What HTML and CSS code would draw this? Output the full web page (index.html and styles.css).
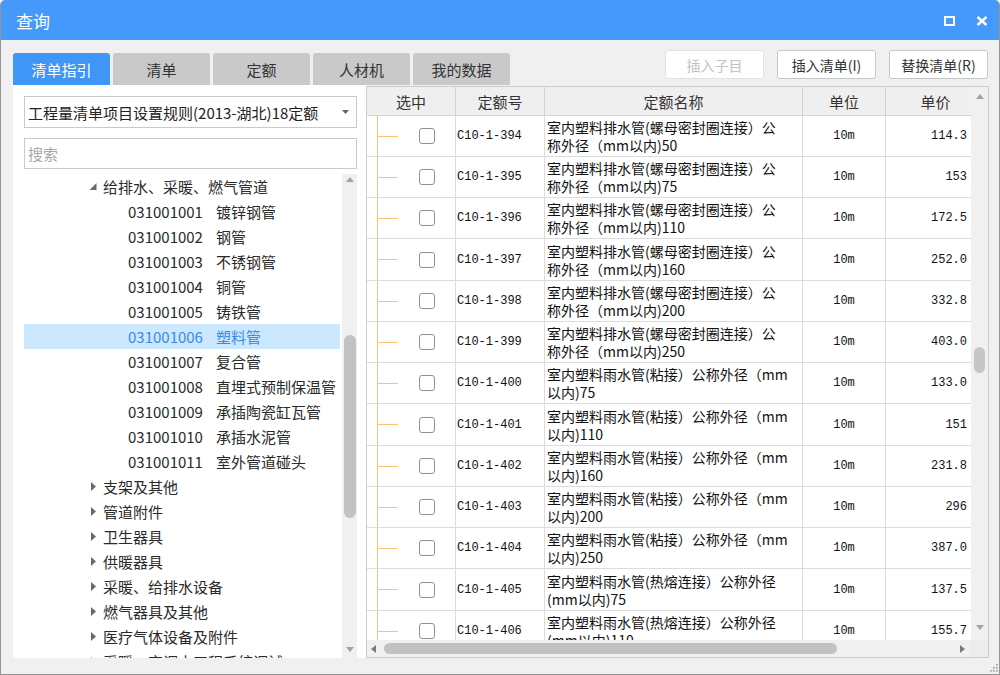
FILE: index.html
```html
<!DOCTYPE html>
<html lang="zh-CN">
<head>
<meta charset="utf-8">
<title>查询</title>
<link rel="stylesheet" href="styles.css">
</head>
<body>
<div class="window">
  <div class="titlebar">
    <span class="title">查询</span>
    <div class="ctrls">
      <svg width="11" height="10" viewBox="0 0 11 10"><rect x="1" y="1" width="9" height="8" fill="none" stroke="#fff" stroke-width="2"/></svg>
      <svg width="12" height="10" viewBox="0 0 12 10"><path d="M1.5 1 L10.5 9 M10.5 1 L1.5 9" stroke="#fff" stroke-width="2.4" fill="none"/></svg>
    </div>
  </div>
  <div class="main">
    <div class="toolbar">
      <div class="tabs">
        <div class="tab active">清单指引</div>
        <div class="tab">清单</div>
        <div class="tab">定额</div>
        <div class="tab">人材机</div>
        <div class="tab">我的数据</div>
      </div>
      <div class="buttons">
        <div class="btn disabled">插入子目</div>
        <div class="btn">插入清单(I)</div>
        <div class="btn">替换清单(R)</div>
      </div>
    </div>
    <div class="content">
      <div class="left">
        <div class="select">
          <span class="select-text">工程量清单项目设置规则(2013-湖北)18定额</span>
          <svg width="7" height="4" viewBox="0 0 7 4"><polygon points="0,0 7,0 3.5,4" fill="#666"/></svg>
        </div>
        <div class="search">搜索</div>
        <div class="tree">
          <div class="tree-rows">
            <div class="node lv1"><svg class="exp" width="7" height="7" viewBox="0 0 7 7"><polygon points="7,0 7,7 0,7" fill="#6a6a6a"/></svg><span>给排水、采暖、燃气管道</span></div>
            <div class="node lv2"><span class="code">031001001</span><span>镀锌钢管</span></div>
            <div class="node lv2"><span class="code">031001002</span><span>钢管</span></div>
            <div class="node lv2"><span class="code">031001003</span><span>不锈钢管</span></div>
            <div class="node lv2"><span class="code">031001004</span><span>铜管</span></div>
            <div class="node lv2"><span class="code">031001005</span><span>铸铁管</span></div>
            <div class="node lv2 selected"><span class="code">031001006</span><span>塑料管</span></div>
            <div class="node lv2"><span class="code">031001007</span><span>复合管</span></div>
            <div class="node lv2"><span class="code">031001008</span><span>直埋式预制保温管</span></div>
            <div class="node lv2"><span class="code">031001009</span><span>承插陶瓷缸瓦管</span></div>
            <div class="node lv2"><span class="code">031001010</span><span>承插水泥管</span></div>
            <div class="node lv2"><span class="code">031001011</span><span>室外管道碰头</span></div>
            <div class="node lv1"><svg class="exp col" width="6" height="9" viewBox="0 0 6 9"><polygon points="0.5,0 5.5,4.5 0.5,9" fill="#6a6a6a"/></svg><span>支架及其他</span></div>
            <div class="node lv1"><svg class="exp col" width="6" height="9" viewBox="0 0 6 9"><polygon points="0.5,0 5.5,4.5 0.5,9" fill="#6a6a6a"/></svg><span>管道附件</span></div>
            <div class="node lv1"><svg class="exp col" width="6" height="9" viewBox="0 0 6 9"><polygon points="0.5,0 5.5,4.5 0.5,9" fill="#6a6a6a"/></svg><span>卫生器具</span></div>
            <div class="node lv1"><svg class="exp col" width="6" height="9" viewBox="0 0 6 9"><polygon points="0.5,0 5.5,4.5 0.5,9" fill="#6a6a6a"/></svg><span>供暖器具</span></div>
            <div class="node lv1"><svg class="exp col" width="6" height="9" viewBox="0 0 6 9"><polygon points="0.5,0 5.5,4.5 0.5,9" fill="#6a6a6a"/></svg><span>采暖、给排水设备</span></div>
            <div class="node lv1"><svg class="exp col" width="6" height="9" viewBox="0 0 6 9"><polygon points="0.5,0 5.5,4.5 0.5,9" fill="#6a6a6a"/></svg><span>燃气器具及其他</span></div>
            <div class="node lv1"><svg class="exp col" width="6" height="9" viewBox="0 0 6 9"><polygon points="0.5,0 5.5,4.5 0.5,9" fill="#6a6a6a"/></svg><span>医疗气体设备及附件</span></div>
            <div class="node lv1"><svg class="exp col" width="6" height="9" viewBox="0 0 6 9"><polygon points="0.5,0 5.5,4.5 0.5,9" fill="#6a6a6a"/></svg><span>采暖、空调水工程系统调试</span></div>
          </div>
          <div class="vbar tree-bar">
            <div class="arrow-box up"><svg width="8" height="5" viewBox="0 0 8 5"><polygon points="0,5 8,5 4,0" fill="#a3a3a3"/></svg></div>
            <div class="thumb tree-thumb"></div>
            <div class="spacer"></div>
            <div class="arrow-box down"><svg width="8" height="5" viewBox="0 0 8 5"><polygon points="0,0 8,0 4,5" fill="#a3a3a3"/></svg></div>
          </div>
        </div>
      </div>
      <div class="right">
        <div class="viewport">
          <div class="grid-row head">
            <div class="th">选中</div>
            <div class="th">定额号</div>
            <div class="th">定额名称</div>
            <div class="th">单位</div>
            <div class="th">单价</div>
          </div>
          <div class="grid-row"><div class="td sel"><div class="sel-inner"><span class="stub"></span><span class="cb"></span></div></div><div class="td code-cell">C10-1-394</div><div class="td name">室内塑料排水管(螺母密封圈连接）公<br>称外径（mm以内)50</div><div class="td unit">10m</div><div class="td price">114.3</div></div>
          <div class="grid-row"><div class="td sel"><div class="sel-inner"><span class="stub"></span><span class="cb"></span></div></div><div class="td code-cell">C10-1-395</div><div class="td name">室内塑料排水管(螺母密封圈连接）公<br>称外径（mm以内)75</div><div class="td unit">10m</div><div class="td price">153</div></div>
          <div class="grid-row"><div class="td sel"><div class="sel-inner"><span class="stub"></span><span class="cb"></span></div></div><div class="td code-cell">C10-1-396</div><div class="td name">室内塑料排水管(螺母密封圈连接）公<br>称外径（mm以内)110</div><div class="td unit">10m</div><div class="td price">172.5</div></div>
          <div class="grid-row"><div class="td sel"><div class="sel-inner"><span class="stub"></span><span class="cb"></span></div></div><div class="td code-cell">C10-1-397</div><div class="td name">室内塑料排水管(螺母密封圈连接）公<br>称外径（mm以内)160</div><div class="td unit">10m</div><div class="td price">252.0</div></div>
          <div class="grid-row"><div class="td sel"><div class="sel-inner"><span class="stub"></span><span class="cb"></span></div></div><div class="td code-cell">C10-1-398</div><div class="td name">室内塑料排水管(螺母密封圈连接）公<br>称外径（mm以内)200</div><div class="td unit">10m</div><div class="td price">332.8</div></div>
          <div class="grid-row"><div class="td sel"><div class="sel-inner"><span class="stub"></span><span class="cb"></span></div></div><div class="td code-cell">C10-1-399</div><div class="td name">室内塑料排水管(螺母密封圈连接）公<br>称外径（mm以内)250</div><div class="td unit">10m</div><div class="td price">403.0</div></div>
          <div class="grid-row"><div class="td sel"><div class="sel-inner"><span class="stub"></span><span class="cb"></span></div></div><div class="td code-cell">C10-1-400</div><div class="td name">室内塑料雨水管(粘接）公称外径（mm<br>以内)75</div><div class="td unit">10m</div><div class="td price">133.0</div></div>
          <div class="grid-row"><div class="td sel"><div class="sel-inner"><span class="stub"></span><span class="cb"></span></div></div><div class="td code-cell">C10-1-401</div><div class="td name">室内塑料雨水管(粘接）公称外径（mm<br>以内)110</div><div class="td unit">10m</div><div class="td price">151</div></div>
          <div class="grid-row"><div class="td sel"><div class="sel-inner"><span class="stub"></span><span class="cb"></span></div></div><div class="td code-cell">C10-1-402</div><div class="td name">室内塑料雨水管(粘接）公称外径（mm<br>以内)160</div><div class="td unit">10m</div><div class="td price">231.8</div></div>
          <div class="grid-row"><div class="td sel"><div class="sel-inner"><span class="stub"></span><span class="cb"></span></div></div><div class="td code-cell">C10-1-403</div><div class="td name">室内塑料雨水管(粘接）公称外径（mm<br>以内)200</div><div class="td unit">10m</div><div class="td price">296</div></div>
          <div class="grid-row"><div class="td sel"><div class="sel-inner"><span class="stub"></span><span class="cb"></span></div></div><div class="td code-cell">C10-1-404</div><div class="td name">室内塑料雨水管(粘接）公称外径（mm<br>以内)250</div><div class="td unit">10m</div><div class="td price">387.0</div></div>
          <div class="grid-row"><div class="td sel"><div class="sel-inner"><span class="stub"></span><span class="cb"></span></div></div><div class="td code-cell">C10-1-405</div><div class="td name">室内塑料雨水管(热熔连接）公称外径<br>(mm以内)75</div><div class="td unit">10m</div><div class="td price">137.5</div></div>
          <div class="grid-row"><div class="td sel"><div class="sel-inner"><span class="stub"></span><span class="cb"></span></div></div><div class="td code-cell">C10-1-406</div><div class="td name">室内塑料雨水管(热熔连接）公称外径<br>(mm以内)110</div><div class="td unit">10m</div><div class="td price">155.7</div></div>
        </div>
        <div class="vbar table-bar">
          <div class="arrow-box up"><svg width="8" height="5" viewBox="0 0 8 5"><polygon points="0,5 8,5 4,0" fill="#a3a3a3"/></svg></div>
          <div class="thumb table-thumb"></div>
          <div class="spacer"></div>
          <div class="arrow-box down"><svg width="8" height="5" viewBox="0 0 8 5"><polygon points="0,0 8,0 4,5" fill="#a3a3a3"/></svg></div>
        </div>
        <div class="hbar">
          <div class="harrow left-arrow"><svg width="5" height="8" viewBox="0 0 5 8"><polygon points="5,0 5,8 0,4" fill="#7a7a7a"/></svg></div>
          <div class="hthumb"></div>
          <div class="spacer"></div>
          <div class="harrow right-arrow"><svg width="5" height="8" viewBox="0 0 5 8"><polygon points="0,0 0,8 5,4" fill="#7a7a7a"/></svg></div>
        </div>
        <div class="corner"></div>
      </div>
    </div>
    <div class="statusbar">
      <svg class="grip" width="10" height="10" viewBox="0 0 10 10" fill="#9a9a9a">
        <rect x="8" y="1" width="1.6" height="1.6"/>
        <rect x="5" y="4" width="1.6" height="1.6"/><rect x="8" y="4" width="1.6" height="1.6"/>
        <rect x="2" y="7" width="1.6" height="1.6"/><rect x="5" y="7" width="1.6" height="1.6"/><rect x="8" y="7" width="1.6" height="1.6"/>
      </svg>
    </div>
  </div>
</div>
</body>
</html>
```
FILE: styles.css
```css
* { box-sizing: border-box; }

body {
  margin: 0;
  background: #ffffff;
  font-family: "Noto Sans CJK SC", "Microsoft YaHei", sans-serif;
}

.window {
  width: 1000px;
  height: 675px;
  border: 1px solid #959595;
  border-top: none;
  border-radius: 5px 5px 0 0;
  overflow: hidden;
  display: flex;
  flex-direction: column;
  background: #f0f0f0;
}

.titlebar {
  height: 40px;
  flex: none;
  background: #4599fb;
  color: #fff;
  display: flex;
  align-items: center;
  padding: 0 11px 0 15px;
  font-size: 17px;
}

.title { flex: 1; margin-top: 1px; }

.ctrls {
  display: flex;
  align-items: center;
  gap: 21px;
  margin-top: 1px;
}

.main {
  flex: 1;
  display: flex;
  flex-direction: column;
  padding: 0 10px 0 12px;
}

.toolbar {
  height: 45px;
  flex: none;
  display: flex;
  align-items: flex-end;
}

.tabs { display: flex; gap: 3px; }

.tab {
  width: 97px;
  height: 32px;
  background: #c9c9c9;
  border-radius: 3px 3px 0 0;
  display: flex;
  align-items: center;
  justify-content: center;
  font-size: 15px;
  color: #333;
}

.tab.active { background: #3f96f7; color: #fff; }

.buttons {
  margin-left: auto;
  margin-right: 1px;
  align-self: flex-start;
  margin-top: 10px;
  display: flex;
  gap: 13px;
}

.btn {
  width: 99px;
  height: 29px;
  background: #fff;
  border: 1px solid #c6c6c6;
  border-radius: 3px;
  display: flex;
  align-items: center;
  justify-content: center;
  font-size: 14px;
  color: #333;
}

.btn.disabled { color: #c2c2c2; border-color: #e2e2e2; }

.content {
  height: 573px;
  flex: none;
  display: flex;
}

.left {
  width: 353px;
  flex: none;
  background: #fff;
  padding: 11px 9px 0 11px;
  display: flex;
  flex-direction: column;
}

.select {
  height: 32px;
  flex: none;
  border: 1px solid #cacaca;
  display: flex;
  align-items: center;
  padding: 0 7px 0 3px;
  font-size: 15px;
  color: #222;
}

.select-text { flex: 1; white-space: nowrap; }

.search {
  margin-top: 10px;
  height: 31px;
  flex: none;
  border: 1px solid #cacaca;
  display: flex;
  align-items: center;
  padding-left: 3px;
  font-size: 15px;
  color: #a8a8a8;
}

.tree {
  margin-top: 5px;
  flex: 1;
  min-height: 0;
  display: flex;
  overflow: hidden;
}

.tree-rows {
  flex: 1;
  padding-right: 2px;
}

.node {
  height: 25px;
  display: flex;
  align-items: center;
  font-size: 15px;
  color: #2a2a2a;
  white-space: nowrap;
}

.node.lv1 { padding-left: 59px; }
.node.lv2 { padding-left: 104px; }

.exp { width: 20px; flex: none; }
.exp.col { width: 20px; padding-left: 1px; }

.node .code { width: 88px; display: inline-block; }

.node.selected { background: #cce8ff; color: #3a8ae6; }

.vbar {
  width: 15px;
  flex: none;
  background: #f0f0f0;
  display: flex;
  flex-direction: column;
  align-items: center;
}

.arrow-box {
  height: 14px;
  flex: none;
  display: flex;
  justify-content: center;
}

.arrow-box.up { align-items: flex-end; }
.arrow-box.down { align-items: flex-start; }

.tree-bar .arrow-box.up { padding-bottom: 5px; height: 13px; }
.tree-bar .arrow-box.down { padding-top: 1px; height: 12px; }

.thumb {
  width: 12px;
  background: #c2c2c2;
  border-radius: 6px;
  flex: none;
}

.tree-thumb { margin-top: 148px; height: 183px; }

.spacer { flex: 1; }

.right {
  flex: 1;
  margin-top: 1px;
  background: #fff;
  border: 1px solid #cdcdcd;
  display: grid;
  grid-template-columns: 1fr 17px;
  grid-template-rows: 1fr 17px;
  min-width: 0;
}

.viewport { overflow: hidden; min-width: 0; min-height: 0; }

.grid-row {
  display: grid;
  grid-template-columns: 89px 89px 258px 83px 100px;
  height: 41px;
}

.grid-row:nth-child(4n+1) { height: 42px; }

.grid-row.head { height: 29px; }

.th {
  background: #efefef;
  border-right: 1px solid #d4d4d4;
  border-bottom: 1px solid #d4d4d4;
  display: flex;
  align-items: center;
  justify-content: center;
  font-size: 15px;
  color: #333;
}

.td {
  border-right: 1px solid #dcdcdc;
  border-bottom: 1px solid #dcdcdc;
  display: flex;
  align-items: center;
  white-space: nowrap;
  overflow: hidden;
  color: #111;
}

.td.sel {
  padding-left: 10px;
  align-items: stretch;
}

.sel-inner {
  flex: 1;
  border-left: 1px solid #f7c177;
  display: flex;
  align-items: center;
}

.stub {
  width: 20px;
  height: 1px;
  background: #f7c177;
  flex: none;
}

.cb {
  width: 16px;
  height: 16px;
  margin-left: 21px;
  flex: none;
  border: 1px solid #929292;
  border-radius: 3px;
  background: #fff;
}

.td.code-cell {
  padding-left: 1px;
  font-family: "Liberation Mono", "Noto Sans CJK SC", monospace;
  font-size: 12px;
}

.td.name {
  padding-left: 2px;
  font-size: 14px;
  line-height: 18px;
}

.td.unit {
  justify-content: center;
  font-family: "Liberation Mono", "Noto Sans CJK SC", monospace;
  font-size: 12px;
}

.td.price {
  justify-content: flex-end;
  padding-right: 18px;
  font-family: "Liberation Mono", monospace;
  font-size: 12px;
}

.table-bar { width: 17px; }
.table-bar .arrow-box.up { height: 12px; }
.table-bar .arrow-box.down { height: 12px; padding-top: 1px; margin-bottom: 4px; }
.table-thumb { width: 11px; margin-top: 248px; height: 26px; background: #c6c6c6; }

.hbar {
  background: #f0f0f0;
  display: flex;
  align-items: center;
  padding: 0 5px 0 4px;
}

.harrow { width: 6px; display: flex; align-items: center; }

.hthumb {
  margin-left: 7px;
  width: 453px;
  height: 11px;
  border-radius: 6px;
  background: #c2c2c2;
}

.corner { background: #ececec; }

.statusbar {
  flex: 1;
  display: flex;
  justify-content: flex-end;
  align-items: flex-end;
}

.grip { margin-right: -9px; margin-bottom: 1px; }
```
